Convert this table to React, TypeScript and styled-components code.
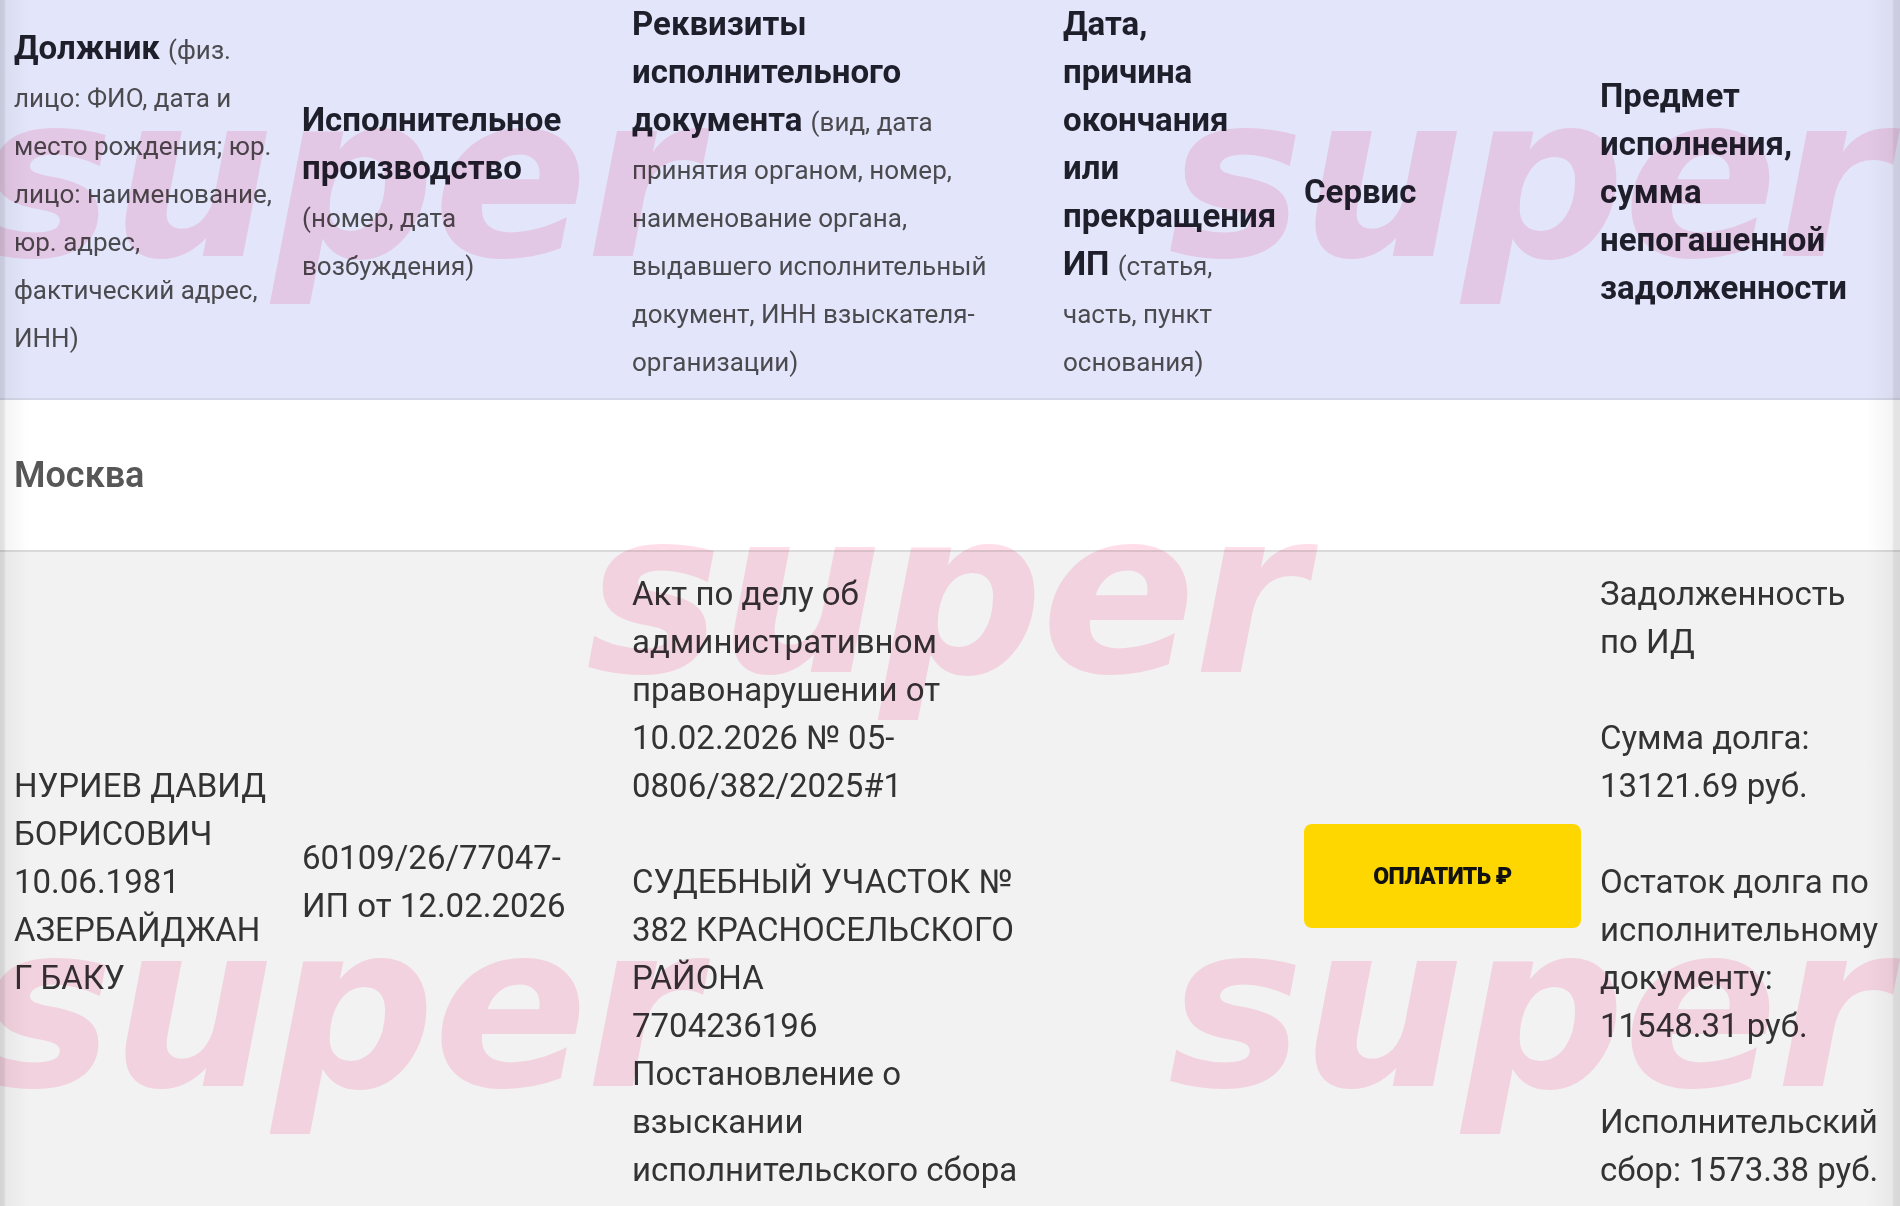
import React from "react";
import styled, { createGlobalStyle } from "styled-components";

const GlobalStyle = createGlobalStyle`
  html, body { margin: 0; padding: 0; background: #ffffff; }
  body { font-family: Roboto, "Noto Sans", "Liberation Sans", sans-serif; }
  * { box-sizing: border-box; }
`;

const COLS = "288px 330px 431px 241px 296px 1fr";

const Page = styled.div`
  position: relative;
  width: 1900px;
  height: 1206px;
  overflow: hidden;
  background: #ffffff;
`;

const HeaderRow = styled.div`
  display: grid;
  grid-template-columns: ${COLS};
  align-items: center;
  background: #e3e6fa;
  padding-bottom: 14px;
  border-bottom: 2px solid #d3d6e6;
`;

const HeadCell = styled.div`
  padding: 0 4px 0 14px;
  font-size: 33px;
  line-height: 48px;
  white-space: nowrap;
  color: #1f1f2c;
`;

const Strong = styled.span`
  font-weight: 700;
`;

const Note = styled.span`
  font-size: 26px;
  line-height: 38px;
  font-weight: 400;
  color: #4a4a4f;
`;

const RegionRow = styled.div`
  padding: 51px 14px 51px 14px;
  font-size: 36px;
  line-height: 48px;
  font-weight: 600;
  color: #575757;
  background: #ffffff;
  border-bottom: 2px solid #dadada;
`;

const DataRow = styled.div`
  display: grid;
  grid-template-columns: ${COLS};
  align-items: center;
  background: #f2f2f2;
  padding: 18px 0 40px 0;
`;

const Cell = styled.div`
  padding: 0 4px 0 14px;
  font-size: 33px;
  line-height: 48px;
  color: #333333;
  white-space: nowrap;
`;

const Para = styled.p<{ $spaced?: boolean }>`
  margin: 0 0 ${(p) => (p.$spaced ? "48px" : "0")} 0;
`;

const PayButton = styled.button`
  display: flex;
  align-items: center;
  justify-content: center;
  width: 277px;
  height: 104px;
  margin-top: -12px;
  border: none;
  border-radius: 8px;
  background: #ffd700;
  color: #111111;
  font-family: Roboto, "Noto Sans", sans-serif;
  font-size: 23px;
  font-weight: 900;
  letter-spacing: -0.6px;
  text-transform: uppercase;
  cursor: pointer;
`;

const Watermarks = styled.div`
  position: absolute;
  inset: 0;
  pointer-events: none;
  mix-blend-mode: multiply;
`;

const Mark = styled.span<{ $x: number; $y: number }>`
  position: absolute;
  left: ${(p) => p.$x}px;
  top: ${(p) => p.$y}px;
  font-family: "DejaVu Sans", sans-serif;
  font-weight: 700;
  font-style: oblique;
  font-size: 228px;
  line-height: 1;
  letter-spacing: -2px;
  color: #ffdeea;
  white-space: nowrap;
`;

const EdgeShade = styled.div<{ $side: "left" | "right" }>`
  position: absolute;
  top: 0;
  bottom: 0;
  ${(p) => p.$side}: 0;
  width: 34px;
  pointer-events: none;
  background: ${(p) =>
    p.$side === "left"
      ? "linear-gradient(to right, rgba(0,0,0,0.13) 0px, rgba(0,0,0,0.11) 4px, rgba(0,0,0,0.04) 6px, rgba(0,0,0,0) 30px)"
      : "linear-gradient(to left, rgba(0,0,0,0.11) 0px, rgba(0,0,0,0.10) 6px, rgba(0,0,0,0.04) 8px, rgba(0,0,0,0) 34px)"};
`;

export default function App() {
  return (
    <>
      <GlobalStyle />
      <Page>
        <HeaderRow>
          <HeadCell>
            <Strong>Должник</Strong>{" "}
            <Note>
              (физ.
              <br />
              лицо: ФИО, дата и
              <br />
              место рождения; юр.
              <br />
              лицо: наименование,
              <br />
              юр. адрес,
              <br />
              фактический адрес,
              <br />
              ИНН)
            </Note>
          </HeadCell>
          <HeadCell>
            <Strong>
              Исполнительное
              <br />
              производство
            </Strong>
            <br />
            <Note>
              (номер, дата
              <br />
              возбуждения)
            </Note>
          </HeadCell>
          <HeadCell>
            <Strong>
              Реквизиты
              <br />
              исполнительного
              <br />
              документа
            </Strong>{" "}
            <Note>
              (вид, дата
              <br />
              принятия органом, номер,
              <br />
              наименование органа,
              <br />
              выдавшего исполнительный
              <br />
              документ, ИНН взыскателя-
              <br />
              организации)
            </Note>
          </HeadCell>
          <HeadCell>
            <Strong>
              Дата,
              <br />
              причина
              <br />
              окончания
              <br />
              или
              <br />
              прекращения
              <br />
              ИП
            </Strong>{" "}
            <Note>
              (статья,
              <br />
              часть, пункт
              <br />
              основания)
            </Note>
          </HeadCell>
          <HeadCell>
            <Strong>Сервис</Strong>
          </HeadCell>
          <HeadCell>
            <Strong>
              Предмет
              <br />
              исполнения,
              <br />
              сумма
              <br />
              непогашенной
              <br />
              задолженности
            </Strong>
          </HeadCell>
        </HeaderRow>

        <RegionRow>Москва</RegionRow>

        <DataRow>
          <Cell>
            НУРИЕВ ДАВИД
            <br />
            БОРИСОВИЧ
            <br />
            10.06.1981
            <br />
            АЗЕРБАЙДЖАН
            <br />Г БАКУ
          </Cell>
          <Cell>
            60109/26/77047-
            <br />
            ИП от 12.02.2026
          </Cell>
          <Cell>
            <Para $spaced>
              Акт по делу об
              <br />
              административном
              <br />
              правонарушении от
              <br />
              10.02.2026 № 05-
              <br />
              0806/382/2025#1
            </Para>
            <Para>
              СУДЕБНЫЙ УЧАСТОК №
              <br />
              382 КРАСНОСЕЛЬСКОГО
              <br />
              РАЙОНА
              <br />
              7704236196
            </Para>
            <Para>
              Постановление о
              <br />
              взыскании
              <br />
              исполнительского сбора
            </Para>
          </Cell>
          <Cell />
          <Cell>
            <PayButton type="button">Оплатить ₽</PayButton>
          </Cell>
          <Cell>
            <Para $spaced>
              Задолженность
              <br />
              по ИД
            </Para>
            <Para $spaced>
              Сумма долга:
              <br />
              13121.69 руб.
            </Para>
            <Para $spaced>
              Остаток долга по
              <br />
              исполнительному
              <br />
              документу:
              <br />
              11548.31 руб.
            </Para>
            <Para>
              Исполнительский
              <br />
              сбор: 1573.38 руб.
            </Para>
          </Cell>
        </DataRow>

        <Watermarks>
          <Mark $x={-22} $y={63}>super</Mark>
          <Mark $x={1168} $y={63}>super</Mark>
          <Mark $x={586} $y={479}>super</Mark>
          <Mark $x={-22} $y={893}>super</Mark>
          <Mark $x={1168} $y={893}>super</Mark>
        </Watermarks>
        <EdgeShade $side="left" />
        <EdgeShade $side="right" />
      </Page>
    </>
  );
}
